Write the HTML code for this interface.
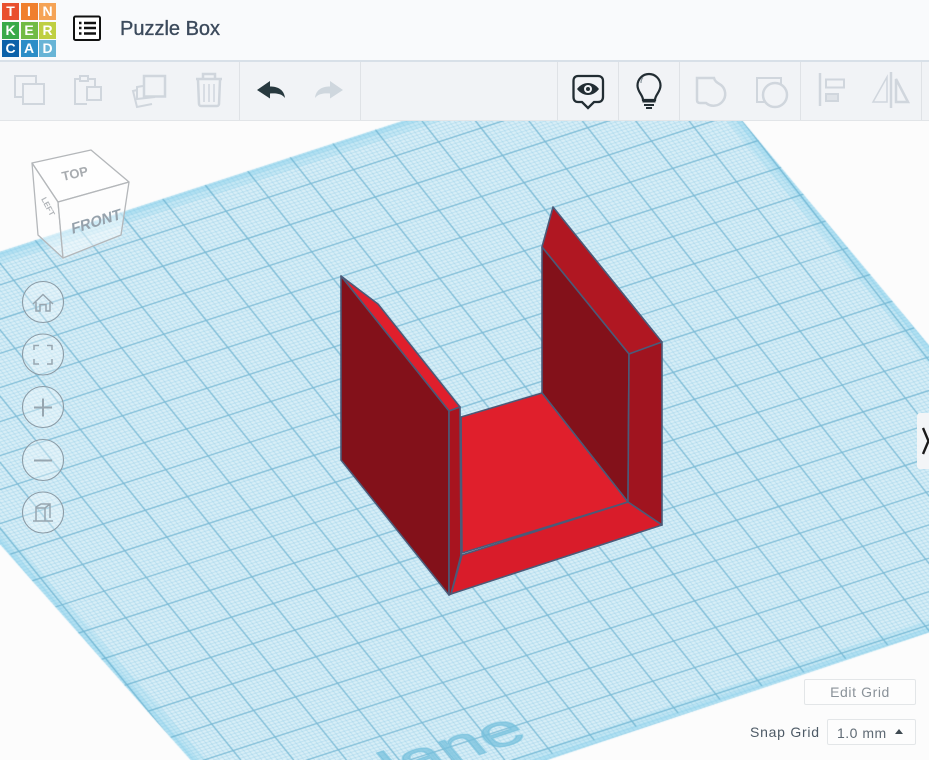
<!DOCTYPE html>
<html><head><meta charset="utf-8"><title>Puzzle Box</title>
<style>
html,body{margin:0;padding:0;width:929px;height:760px;overflow:hidden;background:#fcfcfc;font-family:"Liberation Sans",sans-serif}
#c,#s{position:absolute;left:0;top:0;display:block}
#hdr{position:absolute;left:0;top:0;width:929px;height:60px;background:#f9fafc;border-bottom:2px solid #d8e0e8}
#bar{position:absolute;left:0;top:62px;width:929px;height:58px;background:#f1f3f6;border-bottom:1px solid #e2e5e8}
.t{position:absolute;width:17px;height:17px;color:#fff;font:bold 14px/17px "Liberation Sans",sans-serif;text-align:center}
#title{position:absolute;left:120px;top:17px;font-size:20px;line-height:24px;color:#3c4a5c;-webkit-text-stroke:.35px #3c4a5c}
.d{position:absolute;top:62px;width:1px;height:58px;background:#dfe2e6}
#edit{position:absolute;left:804px;top:679px;width:110px;height:24px;border:1px solid #e3e6e8;border-radius:2px;background:#fdfdfd;color:#8a9299;font-size:14px;line-height:24px;text-align:center;letter-spacing:.6px}
#snapl{position:absolute;left:750px;top:723px;font-size:14px;line-height:18px;color:#4d5a66;letter-spacing:.75px}
#snap{position:absolute;left:827px;top:719px;width:87px;height:24px;border:1px solid #e3e6e8;border-radius:2px;background:#fdfdfd;color:#5f6a74;font-size:14px;line-height:26px;letter-spacing:.5px;text-indent:9px}
#tri{position:absolute;left:895px;top:729px;width:0;height:0;border-left:4.5px solid transparent;border-right:4.5px solid transparent;border-bottom:5px solid #3f4a52}
#tog{position:absolute;left:917px;top:413px;width:12px;height:56px;background:#f3f5f7;border-radius:3px 0 0 3px}
</style></head><body>
<canvas id="c" width="929" height="760"></canvas>
<svg id="s" width="929" height="760" viewBox="0 0 929 760" xmlns="http://www.w3.org/2000/svg">
<text transform="matrix(1.27,-.42,.576,.69,530,738)" text-anchor="end" font-family="Liberation Sans,sans-serif" font-size="56" fill="#74bfdc" fill-opacity=".7" stroke="#74bfdc" stroke-opacity=".6" stroke-width="1.6">Workplane</text>
<!-- object -->
<g stroke="#4b5a78" stroke-width="1.6" stroke-linejoin="round">
<polygon fill="#b01722" points="553,207 662,342 629,354 542,247"/>
<polygon fill="#83111a" points="542,247 629,354 628,502 542,393"/>
<polygon fill="#a0141f" points="629,354 662,342 662,525 628,502"/>
<polygon fill="#e01f2c" points="461,417 542,393 628,502 462,553"/>
<polygon fill="#d91c2a" points="462,555 628,502 662,525 451,594"/>
<polygon fill="#e01f2c" points="341,276 370,298 378,304 460,407 449,411"/>
<polygon fill="#83111a" points="341,276 449,411 449,595 341,460"/>
<polygon fill="#a8141f" points="449,411 460,407 461,555 451,594 449,595"/>
<line x1="461" y1="417" x2="461" y2="555"/>
</g>
<!-- view cube -->
<g stroke="#b4b7ba" stroke-width="1.3" stroke-linejoin="round">
<polygon fill="#fff" fill-opacity=".75" points="32,163 91,150 129,182 58,202"/>
<polygon fill="#fff" fill-opacity=".45" points="32,163 58,202 63,258 38,235"/>
<polygon fill="#fff" fill-opacity=".45" points="58,202 129,182 121,235 63,258"/>
</g>
<text transform="translate(63,181) rotate(-13)" font-family="Liberation Sans,sans-serif" font-weight="bold" font-size="13" fill="#a8acb0">TOP</text>
<text transform="translate(72,234) rotate(-17) skewX(-12)" font-family="Liberation Sans,sans-serif" font-weight="bold" font-size="15" fill="#96a2ac">FRONT</text>
<text transform="translate(41,199) rotate(62)" font-family="Liberation Sans,sans-serif" font-weight="bold" font-size="8" fill="#b0b4b8">LEFT</text>
<!-- nav buttons -->
<g fill="#fff" fill-opacity=".3" stroke="#8b9ba6" stroke-width="1.1">
<circle cx="43" cy="302" r="20.5"/><circle cx="43" cy="354.5" r="20.5"/><circle cx="43" cy="407" r="20.5"/><circle cx="43" cy="460" r="20.5"/><circle cx="43" cy="512.5" r="20.5"/>
</g>
<g fill="none" stroke="#97a6b0" stroke-width="1.5">
<path d="M33 304 43 294.5 53 304M36 302V311H40V304.5H46V311H50V302"/>
<path d="M34 350V345.5H39M47 345.5H52V350M34 359V364H39M47 364H52V359"/>
<path d="M34 407.5H52M43 398.500V416.500" stroke-width="2"/>
<path d="M34 460.500H52" stroke-width="2"/>
<path d="M33 521H53M36 521V507L41 504H50V518M36 508H45V521M45 508 50 504"/>
</g>
</svg>
<div id="hdr"></div>
<div id="bar"></div>
<div class="t" style="left:2px;top:3px;background:#e9502f">T</div><div class="t" style="left:20.500px;top:3px;background:#f07f2d">I</div><div class="t" style="left:39px;top:3px;background:#f5a356">N</div>
<div class="t" style="left:2px;top:21.500px;background:#39a949">K</div><div class="t" style="left:20.500px;top:21.500px;background:#72bb45">E</div><div class="t" style="left:39px;top:21.500px;background:#bfcf42">R</div>
<div class="t" style="left:2px;top:40px;background:#0c61a9">C</div><div class="t" style="left:20.500px;top:40px;background:#2b8dc7">A</div><div class="t" style="left:39px;top:40px;background:#68b4d6">D</div>
<div id="title">Puzzle Box</div>
<div class="d" style="left:239px"></div><div class="d" style="left:360px"></div><div class="d" style="left:557px"></div><div class="d" style="left:618px"></div><div class="d" style="left:679px"></div><div class="d" style="left:800px"></div><div class="d" style="left:921px"></div>
<svg style="position:absolute;left:0;top:0" width="929" height="122" viewBox="0 0 929 122" xmlns="http://www.w3.org/2000/svg">
<!-- list icon -->
<rect x="74" y="16.500" width="26" height="23.500" rx="1.500" fill="#fff" stroke="#111" stroke-width="2"/>
<path d="M79 23h2.500M79 28h2.500M79 33.500h2.500M84 23h12M84 28h12M84 33.500h12" stroke="#111" stroke-width="2.400" fill="none"/>
<g fill="none" stroke="#d0d6dd" stroke-width="2">
<!-- copy -->
<path d="M22 97H15V76H36V83"/><rect x="23" y="84" width="21" height="20"/>
<!-- paste -->
<path d="M87 104H75V79H80M88 79H95V86"/><rect x="87" y="87" width="14" height="13"/><rect x="80" y="76" width="8" height="5"/>
<!-- duplicate -->
<rect x="144" y="76" width="21" height="20.500" stroke-width="2.500"/><path d="M143 86 137 87 137 99 155 97M137 90 133 91 137 107 152 104"/>
<!-- trash -->
<path d="M196 79H222M203 78V74H215V78" stroke-width="2.500"/><path d="M198 80 199 104C199 105 200 106 201 106H217C218 106 219 105 219 104L220 80" stroke-width="2.500"/><path d="M204 84V102M209 84V102M214 84V102" stroke-width="1.500"/>
<!-- group -->
<path d="M697 78H714C715 82 718 83 721 85A11.500 11.500 0 1 1 706 103H700C698 103 697 102 697 100Z" stroke-width="2.500"/>
<!-- ungroup -->
<path d="M765 102H757V78H781V84" stroke-width="2"/><circle cx="775" cy="95" r="12" stroke-width="2.500"/>
<!-- align -->
<path d="M820 73V106" stroke-width="2.500"/><rect x="826" y="79.500" width="18" height="8"/><rect x="826" y="94" width="12" height="7" fill="#dfe3e8"/>
<!-- mirror -->
<path d="M891 72V108" stroke-width="2.500"/><path d="M873 102 887 77V102Z" stroke-width="1.500"/><path d="M896 79V102H908Z" stroke-width="2.500"/>
</g>
<!-- undo / redo -->
<path d="M257 90 270 81V86.500C277 86.500 284 89 285 98 282 94 277 93 270 93.500V98.500Z" fill="#28393f"/>
<path d="M343 90 330 81V86.500C323 86.500 316 89 315 98 318 94 323 93 330 93.500V98.500Z" fill="#cfd7de"/>
<!-- eye bubble -->
<path d="M578 76H598C601 76 603 78 603 81V97C603 100 601 102 598 102H594L588 108 582 102H578C575 102 573.500 100 573.500 97V81C573.500 78 575 76 578 76Z" fill="none" stroke="#222d33" stroke-width="2.300"/>
<path d="M577 89C583 81 593 81 599 89 593 97 583 97 577 89Z" fill="#222d33"/><circle cx="588" cy="89" r="4" fill="#f1f3f6"/><circle cx="588" cy="89" r="2" fill="#222d33"/>
<!-- bulb -->
<path d="M643 100C643 95 637.500 92 637.500 85.500A11.500 11.500 0 0 1 660.500 85.500C660.500 92 655 95 655 100Z" fill="none" stroke="#222d33" stroke-width="2.200"/>
<path d="M643 77.500C641.500 79 641 81 641 83" fill="none" stroke="#8b979e" stroke-width="1.200"/>
<path d="M642.500 101.500H655.500M644 105H654M646 108H652" stroke="#222d33" stroke-width="2" fill="none"/>
</svg>
<div id="edit">Edit Grid</div>
<div id="snapl">Snap Grid</div>
<div id="snap">1.0 mm</div><div id="tri"></div>
<div id="tog"></div>
<svg style="position:absolute;left:917px;top:413px" width="12" height="56" xmlns="http://www.w3.org/2000/svg"><path d="M6 15 11.500 28 6 41" fill="none" stroke="#1a1a1a" stroke-width="2.400"/></svg>
<script>
(function(){
var x=document.getElementById('c').getContext('2d');
var Q=[[0,0,188,631],[0,1,212,658],[1,1,253,643],[2,1,295,630],[17,-8,737,182],[17,-7,758,209],[17,-6,779,237],[17,-5,800,263],[16,-7,715,222],[6,-11,207,252],[5,-11,163,266],[6,-12,183,225],[7,-12,227,211],[7,-11,247,239],[7,-10,268,266]];
var A=[],B=[],i,j,k,n=8;
for(i=0;i<n;i++){A.push([0,0,0,0,0,0,0,0]);B.push(0);}
function add(r,t){for(var a=0;a<n;a++){B[a]+=r[a]*t;for(var b=0;b<n;b++)A[a][b]+=r[a]*r[b];}}
Q.forEach(function(q){var p=q[0]/20,v=q[1]/20,X=q[2]/1000,Y=q[3]/1000;
add([p,v,1,0,0,0,-p*X,-v*X],X);add([0,0,0,p,v,1,-p*Y,-v*Y],Y);});
for(i=0;i<n;i++){var m=i;for(j=i+1;j<n;j++)if(Math.abs(A[j][i])>Math.abs(A[m][i]))m=j;
var t=A[i];A[i]=A[m];A[m]=t;t=B[i];B[i]=B[m];B[m]=t;
for(j=i+1;j<n;j++){var f=A[j][i]/A[i][i];for(k=i;k<n;k++)A[j][k]-=f*A[i][k];B[j]-=f*B[i];}}
var S=[];for(i=n-1;i>=0;i--){var s=B[i];for(k=i+1;k<n;k++)s-=A[i][k]*S[k];S[i]=s/A[i][i];}
function M(p,q){p/=20;q/=20;var w=S[6]*p+S[7]*q+1;return [1000*(S[0]*p+S[1]*q+S[2])/w,1000*(S[3]*p+S[4]*q+S[5])/w];}
function L(a,b,c,d){var P=M(a,b),R=M(c,d);x.moveTo(P[0],P[1]);x.lineTo(R[0],R[1]);}
function poly(){x.beginPath();x.moveTo(-201,317);x.lineTo(670,34);x.lineTo(1116,570);x.lineTo(272,852);x.closePath();}
var p0=-3,p1=19,q0=-14,q1=8;
x.fillStyle='#fcfcfc';x.fillRect(0,0,929,760);
poly();x.fillStyle='#dbf0f8';x.fill();
x.save();x.clip();
x.beginPath();
for(i=p0;i<=p1;i+=.1){L(i,q0,i,q1);}
for(i=q0;i<=q1;i+=.1){L(p0,i,p1,i);}
x.strokeStyle='rgba(125,195,225,.38)';x.lineWidth=1;x.stroke();
poly();x.strokeStyle='rgba(120,205,235,.2)';x.lineWidth=24;x.stroke();
poly();x.strokeStyle='rgba(120,205,235,.25)';x.lineWidth=10;x.stroke();
x.beginPath();
for(i=-2;i<=18;i++){L(i,-13.2,i,7.2);}
for(i=-13;i<=7;i++){L(-2.2,i,18.2,i);}
x.strokeStyle='rgba(95,170,202,.72)';x.lineWidth=1.25;x.stroke();
x.restore();
})();
</script>
</body></html>
